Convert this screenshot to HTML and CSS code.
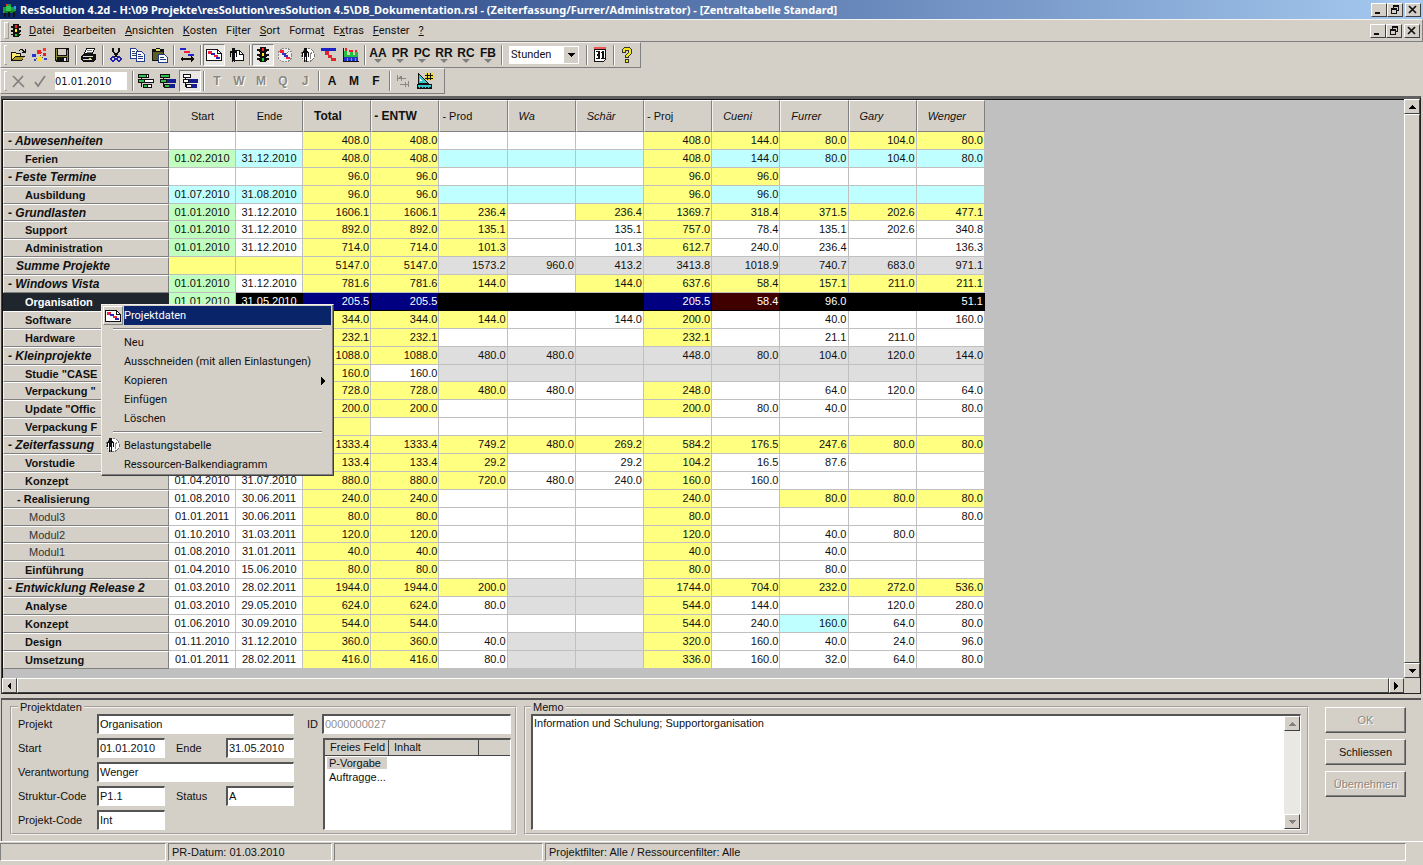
FILE: index.html
```html
<!DOCTYPE html>
<html lang="de">
<head>
<meta charset="utf-8">
<title>ResSolution 4.2d</title>
<link rel="stylesheet" href="styles.css">
</head>
<body>
<svg class="defs" aria-hidden="true">
  <symbol id="i-light" viewBox="0 0 16 16"><path d="M2 2h3v2h1v1H4V4H2zM14 2h-3v2h-1v1h2V4h2zM2 7h3v3H4V9H2zM14 7h-3v3h1V9h2zM2 11h3v3H4v-1H2zM14 11h-3v3h1v-1h2z" fill="#111"/><path d="M5 0h6v15H5z" fill="#111"/><path d="M7 1h2v3H7z" fill="#f22"/><path d="M7 6h2v3H7z" fill="#fe3"/><path d="M7 11h2v3H7z" fill="#1d3"/></symbol>
  <symbol id="i-page" viewBox="0 0 16 16"><path d="M.500 2.500h11l4 4v7H.500z" fill="#fff" stroke="#111"/><path d="M11.500 2.500v4h4" fill="none" stroke="#111"/><path d="M2 4h4v3H2zM8 8h4v2H8z" fill="#f02040"/><path d="M5 6h4v2H5zM10 10h4v2h-4z" fill="#2a20b0"/></symbol>
  <symbol id="i-clockman" viewBox="0 0 16 16"><circle cx="9" cy="8" r="6.5" fill="#fff" stroke="#777" stroke-dasharray="2 1"/><path d="M11 8l2-3M11 8v4" stroke="#888"/><path d="M5 1h3v3H5zM4 4h5v1h1v5H9V6H8v9H7v-5H6v5H5V6H4v4H3V5h1z" fill="#111"/></symbol>
  <symbol id="i-min" viewBox="0 0 10 9"><path d="M1 7h5v2H1z" fill="#111"/></symbol>
  <symbol id="i-restore" viewBox="0 0 10 9"><path d="M3 0h6v6H7V5h1V2H4v1H3zM1 3h6v6H1zM2 5v3h4V5z" fill="#111" fill-rule="evenodd"/></symbol>
  <symbol id="i-close" viewBox="0 0 10 9"><path d="M1 1l7 7M8 1L1 8" stroke="#111" stroke-width="1.7" shape-rendering="auto"/></symbol>
  <symbol id="i-up" viewBox="0 0 8 8"><path d="M4 2l4 4H0z"/></symbol>
  <symbol id="i-down" viewBox="0 0 8 8"><path d="M0 2h8L4 6z"/></symbol>
  <symbol id="i-left" viewBox="0 0 8 8"><path d="M6 0v8L2 4z"/></symbol>
  <symbol id="i-right" viewBox="0 0 8 8"><path d="M2 0v8l4-4z"/></symbol>
</svg>

<header class="titlebar">
  <svg class="icon" viewBox="0 0 16 16"><path d="M1 5h3v6H1zM5 2h4v3H5zM9 5h5v4H9z" fill="#1c9a3c"/><path d="M4 4h5v5H4z" fill="#32c850"/><path d="M3 9h10v2H3z" fill="#127a2c"/><path d="M2 11h2v4H2zM6 10h2v5H6zM11 10h2v5h-2z" fill="#111"/><path d="M4 2h2v2H4z" fill="#e33"/><path d="M12 4h2v3h-2z" fill="#39f"/></svg>
  <h1>ResSolution 4.2d - H:\09 Projekte\resSolution\resSolution 4.5\DB_Dokumentation.rsl - (Zeiterfassung/Furrer/Administrator) - [Zentraltabelle Standard]</h1>
  <div class="winbtns">
    <button aria-label="Minimieren"><svg><use href="#i-min"/></svg></button><button aria-label="Wiederherstellen"><svg><use href="#i-restore"/></svg></button><button class="x" aria-label="Beenden"><svg><use href="#i-close"/></svg></button>
  </div>
</header>

<nav class="menubar band">
  <svg class="icon"><use href="#i-light"/></svg>
  <button><u>D</u>atei</button><button><u>B</u>earbeiten</button><button><u>A</u>nsichten</button><button><u>K</u>osten</button><button>Fi<u>l</u>ter</button><button><u>S</u>ort</button><button>Forma<u>t</u></button><button>E<u>x</u>tras</button><button><u>F</u>enster</button><button><u>?</u></button>
  <div class="winbtns">
    <button aria-label="Fenster minimieren"><svg><use href="#i-min"/></svg></button><button aria-label="Fenster wiederherstellen"><svg><use href="#i-restore"/></svg></button><button class="x" aria-label="Fenster schliessen"><svg><use href="#i-close"/></svg></button>
  </div>
</nav>

<div class="toolbar band" role="toolbar" aria-label="Standard">
  <button class="tb" aria-label="Öffnen"><svg viewBox="0 0 16 16"><path d="M1 14V5h4l1 1h5v3h4l-3 5z" fill="#111"/><path d="M2 6h3l1 1h4v2H5l-3 4z" fill="#ffe96a"/><path d="M5 10h9l-2 3H3z" fill="#a89a20"/><path d="M9 3h1V2h3v1h1v1h1V2h1v4h-4V5h1V4h-1V3h-2v1H9z" fill="#111"/></svg></button>
  <button class="tb" aria-label="Zusammenführen"><svg viewBox="0 0 16 16"><path d="M5 3h4v4H5z" fill="#e22"/><path d="M0 7h4v3H0z" fill="#23c"/><path d="M11 1h3v3h-3z" fill="#f33"/><path d="M6 10h4v4H6z" fill="#fd2"/><path d="M11 6h3v3h-3z" fill="#d22"/><path d="M2 12h2v2H2zM12 11h3v2h-3z" fill="#34c"/><path d="M9 5h1v1H9zM4 11h1v1H4zM10 10h1v1h-1zM8 8h1v1H8z" fill="#555"/></svg></button>
  <button class="tb" aria-label="Speichern"><svg viewBox="0 0 16 16"><path d="M1 1h14v14H2l-1-1z" fill="#111"/><path d="M2 2h1v11H2zM13 3h1v11h-1z" fill="#8a8a30"/><path d="M4 2h8v6H4z" fill="#d4d0c8"/><path d="M3 9h10v1H3z" fill="#8a8a30"/><path d="M10 11h2v3h-2z" fill="#eee"/></svg></button>
  <i class="sep"></i>
  <button class="tb" aria-label="Drucken"><svg viewBox="0 0 16 16"><path d="M5.500 1.500h8l-2 5h-8z" fill="#fff" stroke="#111"/><path d="M6 3.500h5M6 5.500h5" stroke="#777"/><path d="M2 7h12l1 1v4l-3 3H2l-2-2V9z" fill="#111"/><path d="M2 9h10v1H2zM2 12h9v1H2z" fill="#ddd"/><path d="M8 11h2v1H8z" fill="#ee3"/></svg></button>
  <i class="sep"></i>
  <button class="tb" aria-label="Ausschneiden"><svg viewBox="0 0 16 16"><path d="M5 1v3l4 6M11 1v3L7 10" fill="none" stroke="#111" stroke-width="1.5"/><circle cx="5" cy="12" r="2" fill="none" stroke="#22a" stroke-width="1.5"/><circle cx="11" cy="12" r="2" fill="none" stroke="#22a" stroke-width="1.5"/></svg></button>
  <button class="tb" aria-label="Kopieren"><svg viewBox="0 0 16 16"><path d="M.500 1.500h5l3 3v7h-8z" fill="#fff" stroke="#223a8c"/><path d="M2 4.500h3M2 6.500h4M2 8.500h4" stroke="#345"/><path d="M6.500 4.500h5l3 3v7h-8z" fill="#fff" stroke="#223a8c"/><path d="M8 7.500h3M8 9.500h5M8 11.500h5" stroke="#223a8c"/></svg></button>
  <button class="tb" aria-label="Einfügen"><svg viewBox="0 0 16 16"><path d="M0 2h4V1h4v1h4v12H0z" fill="#111"/><path d="M1 5h10v8H1z" fill="#5e5d22"/><path d="M4 2h4v2H4z" fill="#dd6"/><path d="M6.500 7.500h6l3 3v5h-9z" fill="#fff" stroke="#223a8c"/><path d="M8 10.500h4M8 12.500h6" stroke="#223a8c"/></svg></button>
  <i class="sep"></i>
  <button class="tb" aria-label="Zeitachse"><svg viewBox="0 0 16 16"><path d="M1 1h6v2H1z" fill="#22c"/><path d="M5 4h6v2H5z" fill="#e23"/><path d="M9 7h6v2H9z" fill="#22c"/><path d="M1 12l3-3v2h8V9l3 3-3 3v-2H4v2z" fill="#111"/></svg></button>
  <i class="sep"></i>
  <button class="tb on" aria-label="Projektdaten"><svg><use href="#i-page"/></svg></button>
  <button class="tb" aria-label="Ressourcendaten"><svg viewBox="0 0 16 16"><path d="M5.500 3.500h6l4 4v6h-10z" fill="#fff" stroke="#111"/><path d="M11.500 3.500v4h4" fill="none" stroke="#111"/><path d="M4 1h3v3H4zM2 4h7v6H8V6H7v9H6v-5H5v5H4V6H3v4H2z" fill="#111"/></svg></button>
  <i class="sep"></i>
  <button class="tb on" aria-label="Zentraltabelle"><svg><use href="#i-light"/></svg></button>
  <button class="tb" aria-label="Projekttabelle"><svg viewBox="0 0 16 16"><circle cx="8" cy="8" r="7" fill="#eee" stroke="#888" stroke-dasharray="2 1"/><path d="M3 3h4v3H3zM9 10h4v2H9z" fill="#e23"/><path d="M5 6h4v2H5z" fill="#33b"/><path d="M7 8h4v2H7z" fill="#33b"/><path d="M9 7l3-3" stroke="#888"/></svg></button>
  <button class="tb" aria-label="Belastungstabelle"><svg><use href="#i-clockman"/></svg></button>
  <button class="tb" aria-label="Balkendiagramm"><svg viewBox="0 0 16 16"><path d="M0 1h15v3H0z" fill="#1c22c4"/><path d="M4 4h4v4H4zM7 8h4v3H7z" fill="#e2232b"/><path d="M10 11h5v3h-5z" fill="#e2232b"/></svg></button>
  <button class="tb" aria-label="Histogramm"><svg viewBox="0 0 16 16"><path d="M0 1h1v13h15v1H0z" fill="#111"/><path d="M1 9h14v5H1z" fill="#2333c8"/><path d="M1 4h3v4h3V5h3v3h2V5h3v5H1z" fill="#22c03c"/><path d="M2 1h2v3H2zM6 3h4v2H6zM12 3h2v2h-2z" fill="#e22"/><path d="M4 11h1v3H4zM8 11h1v3H8zM12 11h1v3h-1z" fill="#2cd"/></svg></button>
  <i class="sep"></i>
  <button class="tb lt dd">AA</button><button class="tb lt dd">PR</button><button class="tb lt dd">PC</button><button class="tb lt dd">RR</button><button class="tb lt dd">RC</button><button class="tb lt dd">FB</button>
  <i class="sep"></i>
  <span class="combo"><select aria-label="Einheit"><option>Stunden</option></select><svg viewBox="0 0 8 8"><use href="#i-down"/></svg></span>
  <i class="sep wide"></i>
  <button class="tb" aria-label="Kalender"><svg viewBox="0 0 16 16"><path d="M2.500 2.500h11v10l-2 2h-9z" fill="#fff" stroke="#111"/><path d="M2 0h12v2H2z" fill="#e55"/><path d="M4 4h4v8H4v-1h2V9H5V7h1V5H4zM9 5h1V4h2v7h1v1H9v-1h1V6H9z" fill="#111"/></svg></button>
  <i class="sep"></i>
  <button class="tb" aria-label="Hilfe"><svg viewBox="0 0 16 16"><path d="M3.500 5.500v-3l2-2h5l2 2v4l-3 3v1h-3v-2l3-3v-2h-3v2z" fill="#f2e420" stroke="#333"/><path d="M6.500 12.500h3v3h-3z" fill="#f2e420" stroke="#333"/></svg></button>
</div>

<div class="toolbar second-bar band" role="toolbar" aria-label="Bearbeitung">
  <button class="tb" disabled aria-label="Verwerfen"><svg viewBox="0 0 16 16"><path d="M3 3l11 11M13 3L3 14" stroke="#808080" stroke-width="1.700" shape-rendering="auto"/></svg></button>
  <button class="tb" disabled aria-label="Übernehmen"><svg viewBox="0 0 16 16"><path d="M3 9l3 4 7-10" fill="none" stroke="#808080" stroke-width="1.700" shape-rendering="auto"/></svg></button>
  <input class="date" aria-label="Datum" value="01.01.2010">
  <i class="sep"></i>
  <button class="tb" aria-label="Struktur grün"><svg viewBox="0 0 16 16"><path d="M3 1h1v13H3z" fill="#111"/><path d="M.500 1.500h8v3h-8zM.500 6.500h6v3h-6zM5.500 11.500h4v3h-4z" fill="#2fbf4f" stroke="#111"/><path d="M8.500 1.500h2v3h-2zM6.500 6.500h9v3h-9zM9.500 11.500h4v3h-4z" fill="#fff" stroke="#111"/></svg></button>
  <button class="tb" aria-label="Struktur grün-blau"><svg viewBox="0 0 16 16"><path d="M3 1h1v13H3z" fill="#111"/><path d="M.500 1.500h9v3h-9zM.500 6.500h6v3h-6zM4.500 11.500h5v3h-5z" fill="#2fbf4f" stroke="#111"/><path d="M7 6h9v4H7zM9 11h6v4H9z" fill="#141c90"/></svg></button>
  <button class="tb on" aria-label="Struktur blau"><svg viewBox="0 0 16 16"><path d="M3 1h1v13H3z" fill="#111"/><path d="M1.500 1.500h7v3h-7zM1.500 6.500h5v3h-5zM4.500 11.500h5v3h-5z" fill="#fff" stroke="#111"/><path d="M7 6h9v4H7zM9 11h6v4H9z" fill="#141c90"/></svg></button>
  <i class="sep"></i>
  <button class="tb lt off" disabled>T</button><button class="tb lt off" disabled>W</button><button class="tb lt off" disabled>M</button><button class="tb lt off" disabled>Q</button><button class="tb lt off" disabled>J</button>
  <i class="sep"></i>
  <button class="tb lt">A</button><button class="tb lt">M</button><button class="tb lt">F</button>
  <i class="sep"></i>
  <button class="tb" disabled aria-label="Tabulator"><svg viewBox="0 0 16 16"><path d="M2.500 2v6M3 5.500h8M6.500 3v5M4 5.500l2-2M13.500 8v6M5 11.500h8M10.500 9v5" fill="none" stroke="#888"/></svg></button>
  <button class="tb" aria-label="Massstab"><svg viewBox="0 0 16 16"><path d="M1 0l10 10H1z" fill="#35c8cc" stroke="#111"/><path d="M3 6l2 2H3z" fill="#fff"/><path d="M0 11h15v5H0z" fill="#111"/><path d="M1 12h13v2H1z" fill="#35c8cc"/><path d="M2 14h1v1H2zM5 14h1v1H5zM8 14h1v1H8zM11 14h1v1h-1z" fill="#35c8cc"/><path d="M8 0h8v7H8z" fill="#f3dc20"/><path d="M8 2h8v1H8zM8 5h8v1H8zM10 0h1v7h-1zM13 0h1v7h-1z" fill="#111"/></svg></button>
</div>

<main class="workspace">
  <div class="pane"><table class="plan"><colgroup><col class="c-name"><col class="c-date"><col class="c-date"><col><col><col><col><col><col><col><col><col><col></colgroup>
    <thead><tr><th></th><th class="mid">Start</th><th class="mid">Ende</th><th class="sum">Total</th><th class="grp big">- ENTW</th><th class="grp">- Prod</th><th class="res">Wa</th><th class="res">Schär</th><th class="grp">- Proj</th><th class="res">Cueni</th><th class="res">Furrer</th><th class="res">Gary</th><th class="res">Wenger</th></tr></thead>
    <tbody id="rows"></tbody></table></div>
  <div class="vbar"><button aria-label="Nach oben"><svg><use href="#i-up"/></svg></button><div class="thumb"></div><button aria-label="Nach unten"><svg><use href="#i-down"/></svg></button></div>
  <div class="hbar"><button aria-label="Nach links"><svg><use href="#i-left"/></svg></button><div class="thumb"></div><button aria-label="Nach rechts"><svg><use href="#i-right"/></svg></button></div>
  <div class="corner"></div>
</main>

<section class="details">
  <fieldset class="project">
    <legend>Projektdaten</legend>
    <div class="form">
      <label for="f-name">Projekt</label><input id="f-name" class="wide" value="Organisation">
      <label for="f-id" class="id">ID</label><input id="f-id" value="0000000027" disabled>
      <label for="f-start">Start</label><input id="f-start" value="01.01.2010">
      <label for="f-end" class="second">Ende</label><input id="f-end" value="31.05.2010">
      <div class="list">
        <table>
          <thead><tr><th class="k">Freies Feld</th><th class="v">Inhalt</th><th></th></tr></thead>
          <tbody><tr><td><span class="sel">P-Vorgabe</span></td><td></td><td></td></tr><tr><td><span>Auftragge...</span></td><td></td><td></td></tr></tbody>
        </table>
      </div>
      <label for="f-resp" class="first">Verantwortung</label><input id="f-resp" class="wide" value="Wenger">
      <label for="f-struct" class="first">Struktur-Code</label><input id="f-struct" value="P1.1">
      <label for="f-status" class="second">Status</label><input id="f-status" value="A">
      <label for="f-code" class="first">Projekt-Code</label><input id="f-code" value="Int">
    </div>
  </fieldset>
  <fieldset class="memo">
    <legend>Memo</legend>
    <div class="memobox">
      <textarea aria-label="Memo">Information und Schulung; Supportorganisation</textarea>
      <div class="vbar off"><button disabled aria-label="Memo nach oben"><svg><use href="#i-up"/></svg></button><div class="track"></div><button disabled aria-label="Memo nach unten"><svg><use href="#i-down"/></svg></button></div>
    </div>
  </fieldset>
  <div class="actions"><button disabled>OK</button><button>Schliessen</button><button disabled>Übernehmen</button></div>
</section>

<footer class="status"><span class="s1"></span><span class="s2">PR-Datum: 01.03.2010</span><span class="s3"></span><span class="s4">Projektfilter: Alle / Ressourcenfilter: Alle</span></footer>

<div class="context" role="menu">
  <button class="hot" role="menuitem"><span class="mi raised"><svg><use href="#i-page"/></svg></span><span class="ml">Projektdaten</span></button>
  <hr>
  <button role="menuitem"><span class="mi"></span><span class="ml">Neu</span></button>
  <button role="menuitem"><span class="mi"></span><span class="ml">Ausschneiden (mit allen Einlastungen)</span></button>
  <button role="menuitem"><span class="mi"></span><span class="ml">Kopieren</span><svg class="sub"><use href="#i-right"/></svg></button>
  <button role="menuitem"><span class="mi"></span><span class="ml">Einfügen</span></button>
  <button role="menuitem"><span class="mi"></span><span class="ml">Löschen</span></button>
  <hr>
  <button role="menuitem"><span class="mi"><svg><use href="#i-clockman"/></svg></span><span class="ml">Belastungstabelle</span></button>
  <button role="menuitem"><span class="mi"></span><span class="ml">Ressourcen-Balkendiagramm</span></button>
</div>
<script src="app.js"></script>
</body>
</html>
```
FILE: styles.css
```css
* { box-sizing: border-box; }
body {
  margin: 0;
  min-height: 100vh;
  display: flex;
  flex-direction: column;
  background: #d4d0c8;
  color: #111;
  font: 11px/13px "Liberation Sans", Arial, sans-serif;
}
button, input, select, textarea { font: inherit; color: inherit; margin: 0; padding: 0; border-radius: 0; }
button { background: #d4d0c8; border: 0; }
svg { shape-rendering: crispEdges; display: block; }
.defs { display: none; }
.icon { width: 16px; height: 16px; flex: none; }

.titlebar {
  height: 19px;
  display: flex;
  align-items: center;
  padding-left: 2px;
  background: linear-gradient(90deg, #0a246a, #a6caf0);
  color: #fff;
}
.titlebar h1 { margin: 0 0 0 2px; font: bold 11px/18px "Noto Sans", "Open Sans", sans-serif; white-space: nowrap; }
.winbtns { display: flex; margin-left: auto; padding-right: 2px; }
.winbtns button {
  width: 16px;
  height: 14px;
  padding: 1px 2px;
  border: 1px solid;
  border-color: #fff #404040 #404040 #fff;
}
.winbtns .x { margin-left: 2px; }
.winbtns svg { width: 10px; height: 9px; }

.band { border: 1px solid; border-color: #f4f2ee #808080 #808080 #f4f2ee; }
.band::before {
  content: "";
  width: 3px;
  align-self: stretch;
  margin: 2px 3px 2px 3px;
  border: 1px solid;
  border-color: #fff #a09c94 #a09c94 #fff;
  flex: none;
}
.menubar { height: 23px; display: flex; align-items: center; }
.menubar > .icon { width: 14px; margin: 0 2px 0 -3px; }
.menubar > button { padding: 0 5px 0 4px; font: 11px/15px Roboto, "DejaVu Sans Condensed", sans-serif; }

.toolbar { height: 26px; display: flex; align-items: center; align-self: flex-start; padding-right: 2px; }
.toolbar::before { margin: 2px -2px 2px 3px; }
.second-bar { padding-right: 8px; }
.tb { width: 22px; height: 22px; flex: none; display: flex; align-items: center; justify-content: center; }
.tb svg { width: 16px; height: 16px; }
.tb.on { background: #eae8e4; border: 1px solid; border-color: #808080 #fff #fff #808080; }
.sep { width: 2px; height: 20px; margin: 0 1px 0 2px; border-left: 1px solid #808080; border-right: 1px solid #fff; flex: none; }
.sep.wide { margin: 0 1px 0 7px; }
.lt { font-weight: bold; font-size: 12px; line-height: 12px; flex-direction: column; }
.dd::after { content: ""; border: 4px solid transparent; border-top-color: #808080; border-bottom: 0; }
.off { color: #8c8880; text-shadow: 1px 1px #fff; }
.combo { position: relative; margin-left: 5px; }
.combo select { appearance: none; display: block; width: 70px; height: 18px; padding-left: 2px; border: 0; background: #fff; font: 11px/16px Roboto, "DejaVu Sans Condensed", sans-serif; }
.combo svg { position: absolute; right: 1px; top: 1px; width: 14px; height: 16px; padding: 3px; background: #d4d0c8; pointer-events: none; }
.date { width: 72px; height: 18px; margin: 0 3px 0 4px; border: 0; background: #fff; font: 11px/16px "DejaVu Sans Condensed", sans-serif; }

.workspace {
  flex: 1;
  display: grid;
  grid-template: 1fr 15px / 1fr 16px;
  margin: 2px 2px 0 1px;
  border: solid;
  border-width: 3px 1px 1px 1px;
  border-color: #606060 #222 #222 #444;
}
.pane { display: flex; align-items: stretch; background: #c0c0c0; border-top: 1px solid #111; border-left: 1px solid #111; padding-bottom: 9px; overflow: hidden; }
.plan { width: 982px; flex: none; table-layout: fixed; border-collapse: separate; border-spacing: 0; }
.c-name { width: 166px; }
.c-date { width: 67px; }
.plan th { background: #d4d0c8; border: 1px solid; border-color: #fff #808080 #808080 #f4f2ee; padding: 0; text-align: left; font-weight: normal; white-space: nowrap; overflow: hidden; }
.plan thead th { height: 32px; }
.plan .mid { text-align: center; }
.plan .sum { padding-left: 10px; font-weight: bold; font-size: 12px; }
.plan .grp { padding-left: 2px; }
.plan .big { font-weight: bold; font-size: 12px; }
.plan .res { padding-left: 10px; font-style: italic; }
.plan tbody th, .plan td { height: 17px; line-height: 14px; }
.plan tbody .l0, .plan tbody .ls { font-weight: bold; font-style: italic; font-size: 12px; padding-left: 4px; }
.plan tbody .ls { padding-left: 12px; }
.plan tbody .l1 { font-weight: bold; padding-left: 21px; }
.plan tbody .l1g { font-weight: bold; padding-left: 13px; }
.plan tbody .l2 { padding-left: 25px; color: #333; }
.plan td { padding: 0 1px 1px 0; text-align: right; background: #fff; border-right: 1px solid #c0c0c0; border-bottom: 1px solid #c0c0c0; }
.plan td.date-cell { text-align: center; padding-right: 0; }
.plan .y { background: #ffff80; }
.plan .c { background: #c0ffff; }
.plan .g { background: #c0ffc0; }
.plan .n { background: #dedede; }
.plan .k { background: #000; color: #fff; border-color: #000; }
.plan .b { background: #000080; color: #fff; border-color: #000; }
.plan .m { background: #400000; color: #fff; border-color: #000; }
.plan .current th { background: #20262e; color: #fff; border-color: #20262e; }

.vbar { display: flex; flex-direction: column; background: #eae8e4; }
.hbar { display: flex; background: #eae8e4; }
.vbar button, .hbar button, .thumb, .corner { background: #d4d0c8; border: 1px solid; border-color: #fff #404040 #404040 #fff; }
.vbar button { height: 15px; padding: 2px 3px; }
.hbar button { width: 15px; padding: 2px; }
.vbar svg, .hbar svg { width: 8px; height: 8px; }
.thumb, .track { flex: 1; }
.corner { border: 0; }

.details {
  display: flex;
  align-items: flex-start;
  margin: 4px 2px 0 1px;
  padding: 1px 15px 6px 8px;
  border-top: 2px solid #555;
  border-left: 1px solid #555;
}
fieldset { margin: 0; padding: 1px 4px 3px 6px; border: 2px groove #f4f2ee; min-width: 0; }
legend { padding: 0 2px; line-height: 12px; }
.project { width: 507px; flex: none; }
.form { display: grid; grid-template-columns: 79px 68px 61px 68px 28px 1fr; grid-auto-rows: 20px; row-gap: 4px; align-items: center; }
.form input, .memobox, .list { border: 1px solid; border-color: #555 #fff #fff #555; border-top-width: 2px; border-left-width: 2px; background: #fff; }
.form input { width: 100%; height: 20px; padding: 0 0 1px 1px; }
.form input:disabled { color: #909090; }
.form .wide { grid-column: span 3; width: 197px; }
.first { grid-column: 1; }
.second { padding-left: 11px; }
.id { padding-left: 13px; }
.list { grid-column: 6; grid-row: 2 / span 4; align-self: stretch; margin-left: 1px; }
.list table { width: 100%; table-layout: fixed; border-spacing: 0; }
.list th { height: 16px; padding: 0 5px; text-align: left; font-weight: normal; background: #d4d0c8; border: solid #444; border-width: 0 1px 1px 0; white-space: nowrap; }
.list th:last-child { border-right: 0; }
.list .k { width: 64px; }
.list .v { width: 90px; }
.list td { padding: 0 0 0 2px; height: 14px; white-space: nowrap; }
.list td span { padding: 0 2px; }
.list .sel { background: #d4d0c8; padding-right: 6px; }
.memo { flex: 1; margin-left: 7px; padding-left: 5px; padding-right: 6px; }
.memobox { display: flex; height: 116px; }
.memobox textarea { flex: 1; border: 0; resize: none; background: #fff; padding: 1px; line-height: 13px; outline: 0; }
.memobox .vbar { width: 16px; }
.off svg { fill: #808080; }
.actions { flex: none; display: flex; flex-direction: column; gap: 6px; margin: 6px 0 0 16px; }
.actions button { width: 81px; height: 26px; border: 1px solid; border-color: #fff #555 #555 #fff; box-shadow: inset -1px -1px #808080; }
.actions button:disabled { color: #8c8880; text-shadow: 1px 1px #fff; }

.status { display: flex; gap: 2px; height: 24px; padding: 1px 0 4px; border-top: 1px solid #fff; }
.status span { border: 1px solid; border-color: #808080 #fff #fff #808080; padding: 2px 3px; }
.s1 { width: 166px; }
.s2 { width: 164px; }
.s3 { width: 209px; }
.s4 { flex: 1; margin-right: 17px; }

.context {
  position: absolute;
  left: 101px;
  top: 304px;
  width: 233px;
  padding: 1px;
  background: #d4d0c8;
  border: 1px solid;
  border-color: #f4f2ee #404040 #404040 #f4f2ee;
  box-shadow: inset -1px -1px #808080;
  font: 11px/17px Roboto, "DejaVu Sans Condensed", sans-serif;
}
.context button { display: flex; align-items: center; width: 100%; height: 19px; padding-right: 1px; text-align: left; }
.context hr { margin: 3px 10px; border: 0; height: 2px; border-top: 1px solid #808080; border-bottom: 1px solid #fff; }
.mi { width: 20px; height: 19px; flex: none; padding: 1px; }
.mi svg { width: 16px; height: 16px; }
.raised { border: 1px solid; border-color: #fff #808080 #808080 #fff; }
.ml { flex: 1; padding: 1px; white-space: nowrap; }
.hot .ml { background: #0a246a; color: #fff; margin-left: 1px; padding-left: 0; }
.sub { width: 8px; height: 8px; margin-right: 4px; }
```
FILE: app.js
```js
// level | name | cells (optional colour code, then value)
// codes: y yellow, c cyan, g green, n neutral grey, k black, b navy, m maroon
const plan = `
l0|- Abwesenheiten|,,y408.0,y408.0,,,,y408.0,y144.0,y80.0,y104.0,y80.0
l1|Ferien|g01.02.2010,c31.12.2010,y408.0,y408.0,c,c,c,y408.0,c144.0,c80.0,c104.0,c80.0
l0|- Feste Termine|,,y96.0,y96.0,,,,y96.0,y96.0,,,
l1|Ausbildung|c01.07.2010,c31.08.2010,y96.0,y96.0,c,c,c,y96.0,c96.0,c,c,c
l0|- Grundlasten|g01.01.2010,31.12.2010,y1606.1,y1606.1,y236.4,,y236.4,y1369.7,y318.4,y371.5,y202.6,y477.1
l1|Support|g01.01.2010,31.12.2010,y892.0,y892.0,y135.1,,135.1,y757.0,78.4,135.1,202.6,340.8
l1|Administration|g01.01.2010,31.12.2010,y714.0,y714.0,y101.3,,101.3,y612.7,240.0,236.4,,136.3
ls|Summe Projekte|y,y,y5147.0,y5147.0,n1573.2,n960.0,n413.2,n3413.8,n1018.9,n740.7,n683.0,n971.1
l0|- Windows Vista|g01.01.2010,31.12.2010,y781.6,y781.6,y144.0,,y144.0,y637.6,y58.4,y157.1,y211.0,y211.1
l1|Organisation|g01.01.2010,k31.05.2010,b205.5,b205.5,k,k,k,b205.5,m58.4,k96.0,k,k51.1
l1|Software|,,y344.0,y344.0,y144.0,,144.0,y200.0,,40.0,,160.0
l1|Hardware|,,y232.1,y232.1,,,,y232.1,,21.1,211.0,
l0|- Kleinprojekte|,,y1088.0,y1088.0,n480.0,n480.0,n,n448.0,n80.0,n104.0,n120.0,n144.0
l1|Studie "CASE|,,y160.0,160.0,n,n,n,n,n,n,n,n
l1|Verpackung "|,,y728.0,y728.0,y480.0,480.0,,y248.0,,64.0,120.0,64.0
l1|Update "Offic|,,y200.0,y200.0,,,,y200.0,80.0,40.0,,80.0
l1|Verpackung F|,,y,,,,,,,,,
l0|- Zeiterfassung|,,y1333.4,y1333.4,y749.2,y480.0,y269.2,y584.2,y176.5,y247.6,y80.0,y80.0
l1|Vorstudie|,,y133.4,y133.4,y29.2,,29.2,y104.2,16.5,87.6,,
l1|Konzept|01.04.2010,31.07.2010,y880.0,y880.0,y720.0,480.0,240.0,y160.0,160.0,,,
l1g|- Realisierung|01.08.2010,30.06.2011,y240.0,y240.0,,,,y240.0,,y80.0,y80.0,y80.0
l2|Modul3|01.01.2011,30.06.2011,y80.0,y80.0,,,,y80.0,,,,80.0
l2|Modul2|01.10.2010,31.03.2011,y120.0,y120.0,,,,y120.0,,40.0,80.0,
l2|Modul1|01.08.2010,31.01.2011,y40.0,y40.0,,,,y40.0,,40.0,,
l1|Einführung|01.04.2010,15.06.2010,y80.0,y80.0,,,,y80.0,,80.0,,
l0|- Entwicklung Release 2|01.03.2010,28.02.2011,y1944.0,y1944.0,y200.0,n,n,y1744.0,y704.0,y232.0,y272.0,y536.0
l1|Analyse|01.03.2010,29.05.2010,y624.0,y624.0,80.0,n,n,y544.0,144.0,,120.0,280.0
l1|Konzept|01.06.2010,30.09.2010,y544.0,y544.0,,,,y544.0,240.0,c160.0,64.0,80.0
l1|Design|01.11.2010,31.12.2010,y360.0,y360.0,40.0,n,n,y320.0,160.0,40.0,24.0,96.0
l1|Umsetzung|01.01.2011,28.02.2011,y416.0,y416.0,80.0,n,n,y336.0,160.0,32.0,64.0,80.0`;

const body = document.getElementById("rows");
for (const line of plan.trim().split("\n")) {
  const [level, name, cells] = line.split("|");
  const row = body.insertRow();
  if (name === "Organisation") row.className = "current";
  const head = document.createElement("th");
  head.scope = "row";
  head.className = level;
  head.textContent = name;
  row.append(head);
  cells.split(",").forEach((cell, i) => {
    const [, code, value] = cell.match(/^([a-z]?)(.*)$/);
    const td = row.insertCell();
    td.className = (code + (i < 2 ? " date-cell" : "")).trim();
    td.textContent = value;
  });
}
```
